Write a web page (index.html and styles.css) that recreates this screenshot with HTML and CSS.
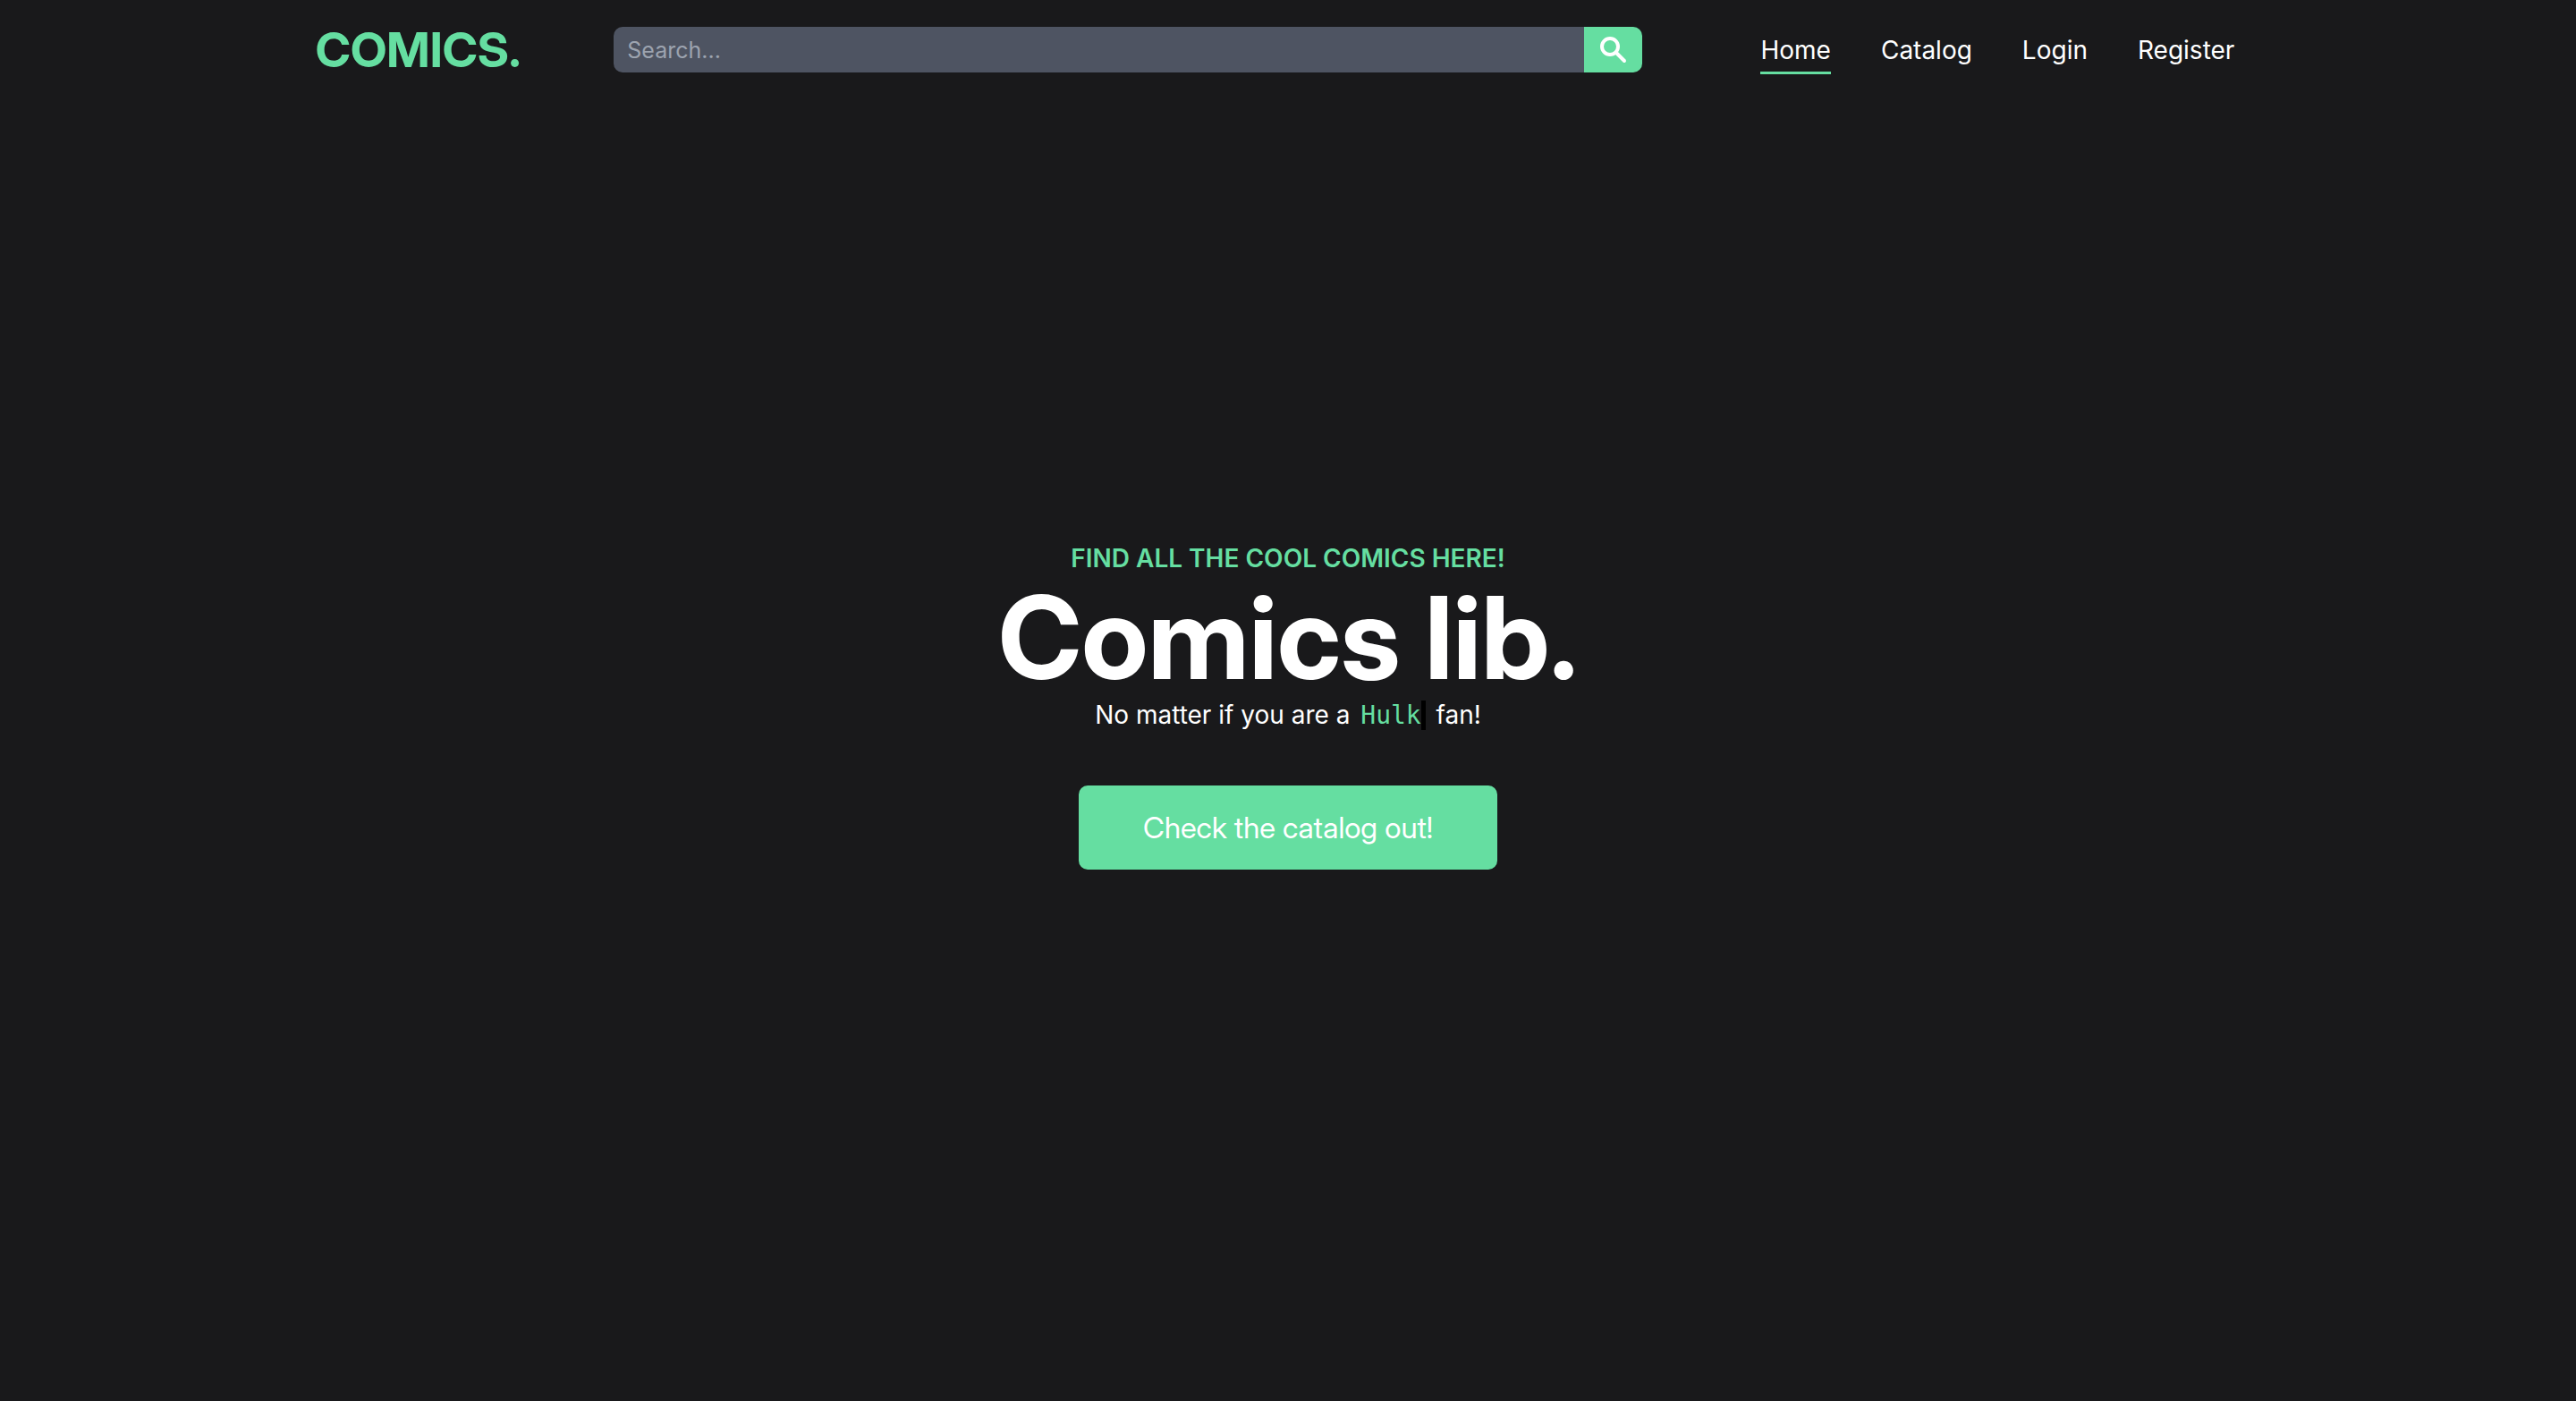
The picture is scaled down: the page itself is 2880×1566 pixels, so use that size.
FILE: index.html
```html
<!DOCTYPE html>
<html lang="en">
<head>
<meta charset="utf-8">
<meta name="viewport" content="width=device-width, initial-scale=1">
<title>Comics lib.</title>
<link rel="stylesheet" href="styles.css">
</head>
<body>
<header class="header">
  <a class="logo" href="#">COMICS.</a>
  <form class="search" role="search">
    <input class="search-input" type="search" placeholder="Search..." aria-label="Search comics">
    <button class="search-button" type="submit" aria-label="Search">
      <svg class="search-icon" viewBox="0 0 30 30" fill="none" stroke="currentColor" stroke-width="4" stroke-linecap="round" aria-hidden="true">
        <circle cx="11" cy="11" r="9"/>
        <path d="M18 18l9 9"/>
      </svg>
    </button>
  </form>
  <nav class="nav">
    <a class="nav-link active" href="#" aria-current="page">Home</a>
    <a class="nav-link" href="#">Catalog</a>
    <a class="nav-link" href="#">Login</a>
    <a class="nav-link" href="#">Register</a>
  </nav>
</header>
<main class="hero">
  <p class="tagline">FIND ALL THE COOL COMICS HERE!</p>
  <h1 class="title">Comics lib.</h1>
  <p class="subtitle">No matter if you are a <span class="typed">Hulk</span> fan!</p>
  <button class="cta" type="button">Check the catalog out!</button>
</main>
</body>
</html>
```
FILE: styles.css
```css
* {
  box-sizing: border-box;
}

body {
  margin: 0;
  min-height: 100vh;
  display: flex;
  flex-direction: column;
  background: #19191b;
  color: #fff;
  font-family: Inter, "Liberation Sans", sans-serif;
}

.header {
  display: flex;
  align-items: center;
  height: 111px;
  padding: 0 13.25% 0 12.25%;
}

.logo {
  flex: none;
  color: #65dea1;
  font-family: "Inter Display", Inter, "Liberation Sans", sans-serif;
  font-size: 54px;
  font-weight: 700;
  text-decoration: none;
}

.search {
  flex: 1;
  display: flex;
  height: 51px;
  margin: 0 132px 0 104px;
  border-radius: 10px;
  overflow: hidden;
}

.search-input {
  flex: 1;
  min-width: 0;
  padding: 0 15px;
  border: 0;
  background: #4e5462;
  color: #fff;
  font: inherit;
  font-size: 25px;
}

.search-input::placeholder {
  color: #9ca3af;
}

.search-button {
  width: 65px;
  padding: 0;
  border: 0;
  display: flex;
  align-items: center;
  justify-content: center;
  background: #65dea1;
  color: #fff;
}

.search-icon {
  width: 30px;
  height: 30px;
}

.nav {
  flex: none;
  display: flex;
  gap: 56px;
}

.nav-link {
  padding: 12px 0 8px;
  border-bottom: 3px solid transparent;
  color: #fff;
  font-size: 28px;
  line-height: 32px;
  text-decoration: none;
}

.nav-link.active {
  border-color: #65dea1;
}

.hero {
  flex: 1;
  display: flex;
  flex-direction: column;
  align-items: center;
  justify-content: center;
  padding-bottom: 102px;
}

.tagline {
  margin: 0;
  color: #65dea1;
  font-size: 28px;
  font-weight: 600;
  line-height: 42px;
}

.title {
  margin: 0;
  font-family: "Inter Display", Inter, "Liberation Sans", sans-serif;
  font-size: 128px;
  font-weight: 700;
  line-height: 136px;
}

.subtitle {
  margin: 0 0 60px;
  font-size: 28px;
  line-height: 36px;
}

.typed {
  margin: 0 4px;
  border-right: 5px solid #000;
  color: #65dea1;
  font-family: "DejaVu Sans Mono", monospace;
}

.cta {
  padding: 28px 72px;
  border: 0;
  border-radius: 10px;
  background: #65dea1;
  color: #fff;
  font-family: "Inter Display", Inter, "Liberation Sans", sans-serif;
  font-size: 33px;
  line-height: 38px;
}
```
